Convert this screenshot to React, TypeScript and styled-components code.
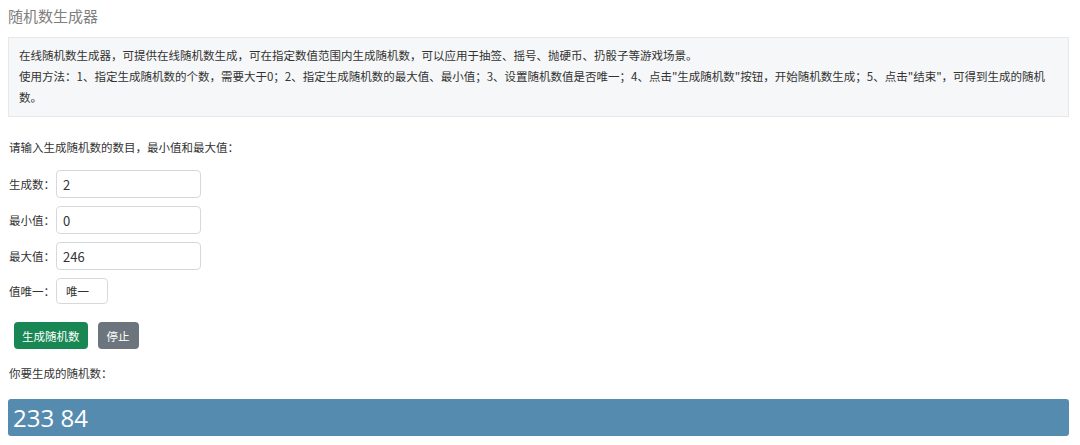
import React from "react";
import styled, { createGlobalStyle } from "styled-components";

const GlobalStyle = createGlobalStyle`
  html, body {
    margin: 0;
    padding: 0;
    background: #ffffff;
  }
  body {
    font-family: "Noto Sans CJK SC", "Noto Sans", "Liberation Sans", sans-serif;
    color: #333333;
  }
`;

const Page = styled.div`
  padding: 5px 11px 0 8px;
`;

const Title = styled.h1`
  margin: 0;
  font-size: 15px;
  font-weight: 400;
  line-height: 22px;
  color: #808080;
`;

const InfoBox = styled.div`
  margin-top: 10px;
  padding: 7px 10px 8px 10px;
  background: #f6f7f8;
  border: 1px solid #e6e8ea;
  font-size: 11.5px;
  line-height: 21px;
  color: #333333;
`;

const Prompt = styled.p`
  margin: 21px 0 0 1px;
  font-size: 11.5px;
  line-height: 18px;
  color: #333333;
`;

const Form = styled.div`
  margin-top: 14px;
  display: flex;
  flex-direction: column;
  gap: 8px;
`;

const Row = styled.div`
  display: flex;
  align-items: center;
`;

const Label = styled.label`
  width: 47px;
  padding-left: 1px;
  font-size: 11.5px;
  color: #333333;
`;

const TextInput = styled.input`
  box-sizing: border-box;
  width: 145px;
  height: 28px;
  padding: 0 6px;
  border: 1px solid #d6d9dc;
  border-radius: 4px;
  font-family: inherit;
  font-size: 13px;
  color: #333333;
  background: #ffffff;
  outline: none;
`;

const SelectBox = styled.div`
  box-sizing: border-box;
  width: 52px;
  height: 26px;
  display: flex;
  align-items: center;
  padding-left: 9px;
  border: 1px solid #d6d9dc;
  border-radius: 4px;
  font-size: 11.5px;
  color: #333333;
`;

const Buttons = styled.div`
  margin: 18px 0 0 6px;
  display: flex;
  gap: 10px;
`;

const Button = styled.button<{ $tone: "success" | "secondary" }>`
  height: 27px;
  padding: 0 ${(p) => (p.$tone === "success" ? "8px" : "9px")};
  border: none;
  border-radius: 4px;
  font-family: inherit;
  font-size: 11.5px;
  color: #ffffff;
  background: ${(p) => (p.$tone === "success" ? "#198754" : "#6c757d")};
  cursor: pointer;
`;

const ResultLabel = styled.p`
  margin: 15px 0 0 1px;
  font-size: 11.5px;
  line-height: 18px;
  color: #333333;
`;

const ResultBar = styled.div`
  margin-top: 17px;
  height: 37px;
  display: flex;
  align-items: center;
  padding-left: 5px;
  background: #568bb0;
  border-radius: 3px;
  font-family: "Open Sans", "Noto Sans", sans-serif;
  font-size: 24px;
  color: #ffffff;
`;

export default function App() {
  return (
    <>
      <GlobalStyle />
      <Page>
        <Title>随机数生成器</Title>
        <InfoBox>
          在线随机数生成器，可提供在线随机数生成，可在指定数值范围内生成随机数，可以应用于抽签、摇号、抛硬币、扔骰子等游戏场景。
          <br />
          使用方法：1、指定生成随机数的个数，需要大于0；2、指定生成随机数的最大值、最小值；3、设置随机数值是否唯一；4、点击"生成随机数"按钮，开始随机数生成；5、点击"结束"，可得到生成的随机数。
        </InfoBox>
        <Prompt>请输入生成随机数的数目，最小值和最大值：</Prompt>
        <Form>
          <Row>
            <Label>生成数：</Label>
            <TextInput defaultValue="2" />
          </Row>
          <Row>
            <Label>最小值：</Label>
            <TextInput defaultValue="0" />
          </Row>
          <Row>
            <Label>最大值：</Label>
            <TextInput defaultValue="246" />
          </Row>
          <Row>
            <Label>值唯一：</Label>
            <SelectBox>唯一</SelectBox>
          </Row>
        </Form>
        <Buttons>
          <Button $tone="success">生成随机数</Button>
          <Button $tone="secondary">停止</Button>
        </Buttons>
        <ResultLabel>你要生成的随机数：</ResultLabel>
        <ResultBar>233 84</ResultBar>
      </Page>
    </>
  );
}
